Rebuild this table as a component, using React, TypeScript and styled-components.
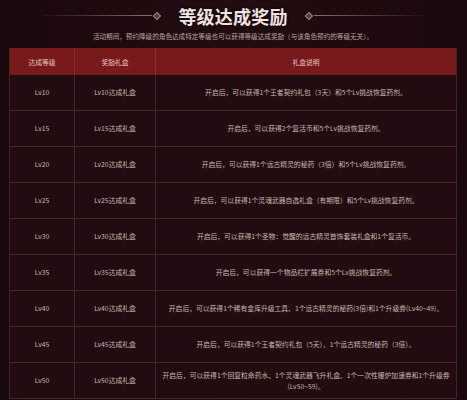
import React from 'react';
import styled, { createGlobalStyle } from 'styled-components';

const GlobalStyle = createGlobalStyle`
  html, body {
    margin: 0;
    padding: 0;
    background: #1c0b0d;
  }
  body {
    font-family: "Noto Sans CJK SC", "Noto Sans", sans-serif;
  }
`;

const Page = styled.div`
  width: 467px;
  height: 400px;
  overflow: hidden;
  background: linear-gradient(90deg, #1a090b 0%, #200d0f 50%, #1a090b 100%);
  padding: 0 10px 0 9px;
  box-sizing: border-box;
`;

const TitleRow = styled.div`
  display: flex;
  align-items: center;
  justify-content: center;
  height: 27px;
  padding-top: 2px;
`;

const Line = styled.div<{ $side: 'left' | 'right' }>`
  width: 114px;
  height: 1px;
  background: ${(p) =>
    p.$side === 'left'
      ? 'linear-gradient(90deg, rgba(150,110,110,0) 0%, #8c6c6c 100%)'
      : 'linear-gradient(90deg, #8c6c6c 0%, rgba(150,110,110,0) 100%)'};
`;

const Diamond = styled.div`
  width: 4px;
  height: 4px;
  border: 1px solid #9a7e7e;
  background: #5a3c3e;
  transform: rotate(45deg);
  margin: 0 2px;
`;

const Title = styled.h1`
  margin: 0 16px;
  font-size: 18px;
  line-height: 24px;
  font-weight: 700;
  color: #f1e2e2;
  letter-spacing: 0.2px;
  text-shadow: 0 0 3px rgba(0, 0, 0, 0.6);
`;

const Notice = styled.p`
  margin: 0;
  height: 19px;
  font-size: 6.6px;
  line-height: 14px;
  text-align: center;
  color: #b9a4a4;
`;

const Table = styled.table`
  width: 448px;
  border-collapse: collapse;
  table-layout: fixed;
  border-left: 1px solid #4a2224;
  border-right: 1px solid #4a2224;
`;

const HeadCell = styled.th`
  height: 27px;
  padding: 0;
  background: #781a1c;
  border-right: 1px solid #8d2c2d;
  color: #e6c4c4;
  font-size: 6.8px;
  font-weight: 400;
  text-align: center;
  &:last-child {
    border-right: none;
  }
`;

const Row = styled.tr`
  background: #210d0f;
  border-bottom: 1px solid #4d2426;
`;

const Cell = styled.td<{ $wide?: boolean }>`
  height: 35px;
  padding: 0 ${(p) => (p.$wide ? '3px' : '2px')};
  border-right: 1px solid #4a2224;
  color: #c9b3b3;
  font-size: 6.8px;
  line-height: 11px;
  text-align: center;
  white-space: pre-line;
  &:last-child {
    border-right: none;
  }
`;

const rewards = [
  { lv: 'Lv10', text: '开启后，可以获得1个王者契约礼包（3天）和5个Lv挑战恢复药剂。' },
  { lv: 'Lv15', text: '开启后，可以获得2个复活币和5个Lv挑战恢复药剂。' },
  { lv: 'Lv20', text: '开启后，可以获得1个远古精灵的秘药（3倍）和5个Lv挑战恢复药剂。' },
  { lv: 'Lv25', text: '开启后，可以获得1个灵魂武器自选礼盒（有期限）和5个Lv挑战恢复药剂。' },
  { lv: 'Lv30', text: '开启后，可以获得1个圣物：觉醒的远古精灵首饰套装礼盒和1个复活币。' },
  { lv: 'Lv35', text: '开启后，可以获得一个物品栏扩展券和5个Lv挑战恢复药剂。' },
  { lv: 'Lv40', text: '开启后，可以获得1个稀有金库升级工具、1个远古精灵的秘药(3倍)和1个升级券(Lv40~49)。' },
  { lv: 'Lv45', text: '开启后，可以获得1个王者契约礼包（5天）、1个远古精灵的秘药（3倍）。' },
  { lv: 'Lv50', text: '开启后，可以获得1个回复粒命药水、1个灵魂武器飞升礼盒、1个一次性暖炉加速券和1个升级券\n(Lv50~59)。' },
];

export default function App() {
  return (
    <>
      <GlobalStyle />
      <Page>
        <TitleRow>
          <Line $side="left" />
          <Diamond />
          <Title>等级达成奖励</Title>
          <Diamond />
          <Line $side="right" />
        </TitleRow>
        <Notice>
          活动期间，预约降级的角色达成特定等级也可以获得等级达成奖励（与该角色预约的等级无关）。
        </Notice>
        <Table>
          <colgroup>
            <col style={{ width: 65 }} />
            <col style={{ width: 81 }} />
            <col />
          </colgroup>
          <thead>
            <tr>
              <HeadCell>达成等级</HeadCell>
              <HeadCell>奖励礼盒</HeadCell>
              <HeadCell>礼盒说明</HeadCell>
            </tr>
          </thead>
          <tbody>
            {rewards.map((r) => (
              <Row key={r.lv}>
                <Cell>{r.lv}</Cell>
                <Cell>{r.lv}达成礼盒</Cell>
                <Cell $wide>{r.text}</Cell>
              </Row>
            ))}
          </tbody>
        </Table>
      </Page>
    </>
  );
}
